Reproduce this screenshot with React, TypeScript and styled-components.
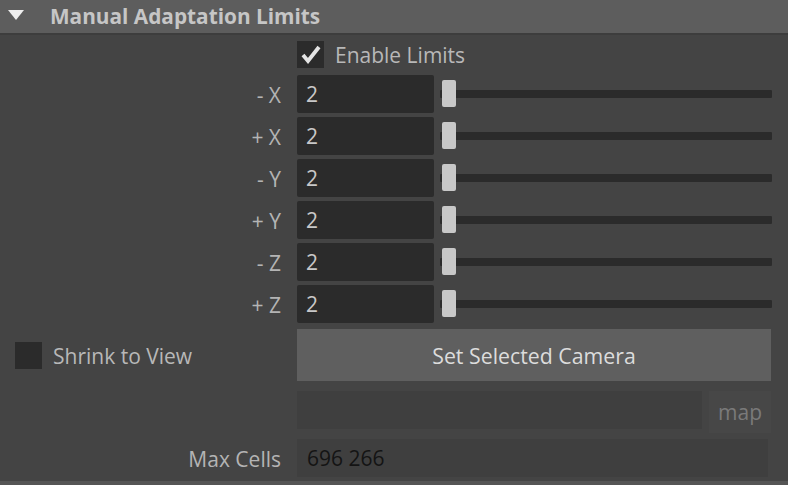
import styled, { createGlobalStyle } from 'styled-components'

const Global = createGlobalStyle`
  html, body {
    margin: 0;
    padding: 0;
    background: #444444;
    font-family: "Open Sans", "Noto Sans", sans-serif;
    color: #bbbbbb;
  }
`

const axes = ['- X', '+ X', '- Y', '+ Y', '- Z', '+ Z']

export default function App() {
  return (
    <Panel>
      <Global />
      <Header>
        <Arrow />
        <Title>Manual Adaptation Limits</Title>
      </Header>
      <Body>
        <Row $top={6}>
          <span />
          <CheckLine>
            <Box>
              <svg width="20" height="19" viewBox="0 0 20 19">
                <polyline points="2,10 7,16 18,2" fill="none" stroke="#e4e4e4" strokeWidth="3.8" />
              </svg>
            </Box>
            <CheckText>Enable Limits</CheckText>
          </CheckLine>
        </Row>
        {axes.map((a, i) => (
          <Row key={a} $top={i === 0 ? 7 : 4}>
            <Label>{a}</Label>
            <SliderLine>
              <Field>2</Field>
              <Slider>
                <Track />
                <Handle />
              </Slider>
            </SliderLine>
          </Row>
        ))}
        <Row $top={6}>
          <CheckLine $left>
            <Box />
            <CheckText>Shrink to View</CheckText>
          </CheckLine>
          <Button>Set Selected Camera</Button>
        </Row>
        <Row $top={10}>
          <span />
          <MapLine>
            <EmptyField />
            <MapButton>map</MapButton>
          </MapLine>
        </Row>
        <Row $top={6}>
          <Label>Max Cells</Label>
          <CellsField>696 266</CellsField>
        </Row>
      </Body>
      <Footer />
    </Panel>
  )
}

const Panel = styled.div`
  width: 788px;
  height: 485px;
  overflow: hidden;
  background: #444444;
  display: flex;
  flex-direction: column;
`

//Header styled
const Header = styled.div`
  height: 33px;
  background: #5d5d5d;
  border-bottom: 2px solid #3d3d3d;
  display: flex;
  align-items: center;
  flex-shrink: 0;
`
const Arrow = styled.div`
  margin-left: 8px;
  width: 0;
  height: 0;
  border-left: 8px solid transparent;
  border-right: 8px solid transparent;
  border-top: 10px solid #eeeeee;
  margin-top: -4px;
`
const Title = styled.span`
  margin-left: 26px;
  font-weight: bold;
  font-size: 20.8px;
  color: #c6c6c6;
  margin-top: -2px;
`

//Body styled
const Body = styled.div`
  flex: 1;
  display: flex;
  flex-direction: column;
  padding-right: 16px;
`
const Row = styled.div<{ $top: number }>`
  display: grid;
  grid-template-columns: 281px 1fr;
  column-gap: 16px;
  align-items: center;
  margin-top: ${p => p.$top}px;
`
const Label = styled.span`
  text-align: right;
  font-size: 21px;
  line-height: 28px;
  padding-top: 2px;
  color: #b4b4b4;
`
const CheckLine = styled.div<{ $left?: boolean }>`
  display: flex;
  align-items: center;
  gap: 11px;
  height: 27px;
  padding-left: ${p => (p.$left ? 15 : 0)}px;
`
const Box = styled.div`
  width: 27px;
  height: 27px;
  background: #2b2b2b;
  display: flex;
  align-items: center;
  justify-content: center;
`
const CheckText = styled.span`
  font-size: 21px;
  line-height: 25px;
  padding-top: 2px;
  color: #b8b8b8;
`
const SliderLine = styled.div`
  display: flex;
  align-items: center;
  gap: 6px;
`
const Field = styled.div`
  width: 128px;
  height: 38px;
  background: #2b2b2b;
  border-radius: 2px;
  padding-left: 9px;
  display: flex;
  align-items: center;
  font-size: 21px;
  color: #c8c8c8;
`
const Slider = styled.div`
  position: relative;
  flex: 1;
  height: 38px;
  display: flex;
  align-items: center;
`
const Track = styled.div`
  width: 100%;
  height: 8px;
  background: #2b2b2b;
  border-radius: 1px;
`
const Handle = styled.div`
  position: absolute;
  left: 2px;
  top: 5px;
  width: 14px;
  height: 27px;
  background: #c8c8c8;
  border-radius: 2px;
`
const Button = styled.div`
  height: 52px;
  width: 474px;
  background: #5f5f5f;
  display: flex;
  align-items: center;
  justify-content: center;
  font-size: 21.3px;
  color: #dcdcdc;
`
const MapLine = styled.div`
  display: flex;
  align-items: flex-start;
  gap: 7px;
  height: 42px;
`
const EmptyField = styled.div`
  width: 405px;
  height: 38px;
  background: #3f3f3f;
`
const MapButton = styled.div`
  width: 62px;
  height: 42px;
  background: #474747;
  color: #7a7a7a;
  font-size: 21px;
  display: flex;
  align-items: center;
  justify-content: center;
`
const CellsField = styled.div`
  width: 461px;
  height: 38px;
  background: #3f3f3f;
  display: flex;
  align-items: center;
  padding-left: 10px;
  font-size: 21px;
  color: #141414;
`
const Footer = styled.div`
  height: 4px;
  background: #555555;
  flex-shrink: 0;
`
